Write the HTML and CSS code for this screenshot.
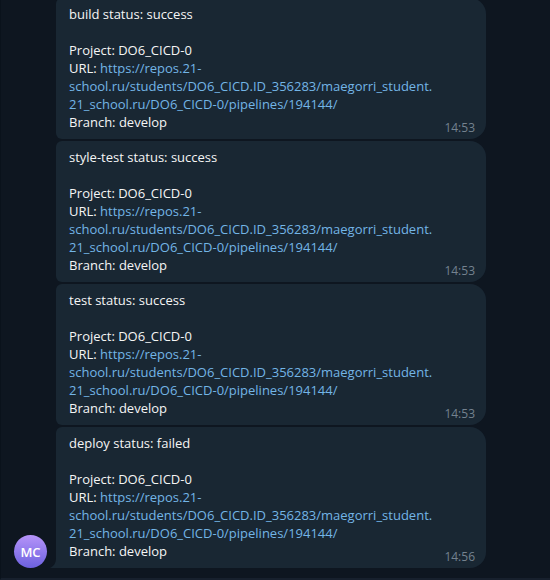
FILE: index.html
```html
<!DOCTYPE html>
<html lang="en">
<head>
<meta charset="utf-8">
<title>Pipeline notifications</title>
<link rel="stylesheet" href="styles.css">
</head>
<body>
<main class="chat">
  <div class="group">
    <div class="avatar">MC</div>
    <div class="messages">
      <article class="bubble">
        <p class="title">build status: success</p>
        <p>Project: DO6_CICD-0</p>
        <p>URL: <a href="https://repos.21-school.ru/students/DO6_CICD.ID_356283/maegorri_student.21_school.ru/DO6_CICD-0/pipelines/194144/">https://repos.21-<wbr>school.ru/students/DO6_CICD.ID_356283/maegorri_student.<wbr>21_school.ru/DO6_CICD-0/pipelines/194144/</a></p>
        <p>Branch: develop</p>
        <time>14:53</time>
      </article>
      <article class="bubble">
        <p class="title">style-test status: success</p>
        <p>Project: DO6_CICD-0</p>
        <p>URL: <a href="https://repos.21-school.ru/students/DO6_CICD.ID_356283/maegorri_student.21_school.ru/DO6_CICD-0/pipelines/194144/">https://repos.21-<wbr>school.ru/students/DO6_CICD.ID_356283/maegorri_student.<wbr>21_school.ru/DO6_CICD-0/pipelines/194144/</a></p>
        <p>Branch: develop</p>
        <time>14:53</time>
      </article>
      <article class="bubble">
        <p class="title">test status: success</p>
        <p>Project: DO6_CICD-0</p>
        <p>URL: <a href="https://repos.21-school.ru/students/DO6_CICD.ID_356283/maegorri_student.21_school.ru/DO6_CICD-0/pipelines/194144/">https://repos.21-<wbr>school.ru/students/DO6_CICD.ID_356283/maegorri_student.<wbr>21_school.ru/DO6_CICD-0/pipelines/194144/</a></p>
        <p>Branch: develop</p>
        <time>14:53</time>
      </article>
      <article class="bubble last">
        <svg class="tail" viewBox="0 0 6 10" aria-hidden="true"><path d="M6 0C6 5 4 8 0 10H6Z"/></svg>
        <p class="title">deploy status: failed</p>
        <p>Project: DO6_CICD-0</p>
        <p>URL: <a href="https://repos.21-school.ru/students/DO6_CICD.ID_356283/maegorri_student.21_school.ru/DO6_CICD-0/pipelines/194144/">https://repos.21-<wbr>school.ru/students/DO6_CICD.ID_356283/maegorri_student.<wbr>21_school.ru/DO6_CICD-0/pipelines/194144/</a></p>
        <p>Branch: develop</p>
        <time>14:56</time>
      </article>
    </div>
  </div>
</main>
</body>
</html>
```
FILE: styles.css
```css
* {
  box-sizing: border-box;
}

body {
  margin: 0;
  background: #0e1620;
  color: #f5f5f5;
  font: 13px/18px "Open Sans", "Noto Sans", sans-serif;
}

.chat {
  display: flex;
  flex-direction: column;
  justify-content: flex-end;
  height: 100vh;
  overflow: hidden;
  padding: 0 14px 10px 13px;
  border-left: 1px solid #0a121b;
  border-bottom: 2px solid #17202d;
}

.group {
  display: flex;
  align-items: flex-end;
  gap: 9px;
}

.avatar {
  flex: none;
  width: 33px;
  height: 33px;
  border-radius: 50%;
  background: linear-gradient(#b694f9, #6c61df);
  color: #fff;
  font-weight: 600;
  line-height: 34px;
  text-align: center;
}

.messages {
  display: flex;
  flex: 1;
  flex-direction: column;
  gap: 2px;
  min-width: 0;
  max-width: 430px;
}

.bubble {
  position: relative;
  padding: 7px 13px 8px;
  border-radius: 6px 16px 16px 6px;
  background: #192733;
}

.last {
  border-bottom-left-radius: 0;
}

.tail {
  position: absolute;
  right: 100%;
  bottom: 0;
  width: 6px;
  height: 10px;
  fill: #192733;
}

p {
  margin: 0;
}

.title {
  margin-bottom: 18px;
}

a {
  color: #73b5e6;
  text-decoration: none;
}

time {
  position: absolute;
  right: 11px;
  bottom: 2px;
  color: #74828f;
  font-size: 12px;
}
```
